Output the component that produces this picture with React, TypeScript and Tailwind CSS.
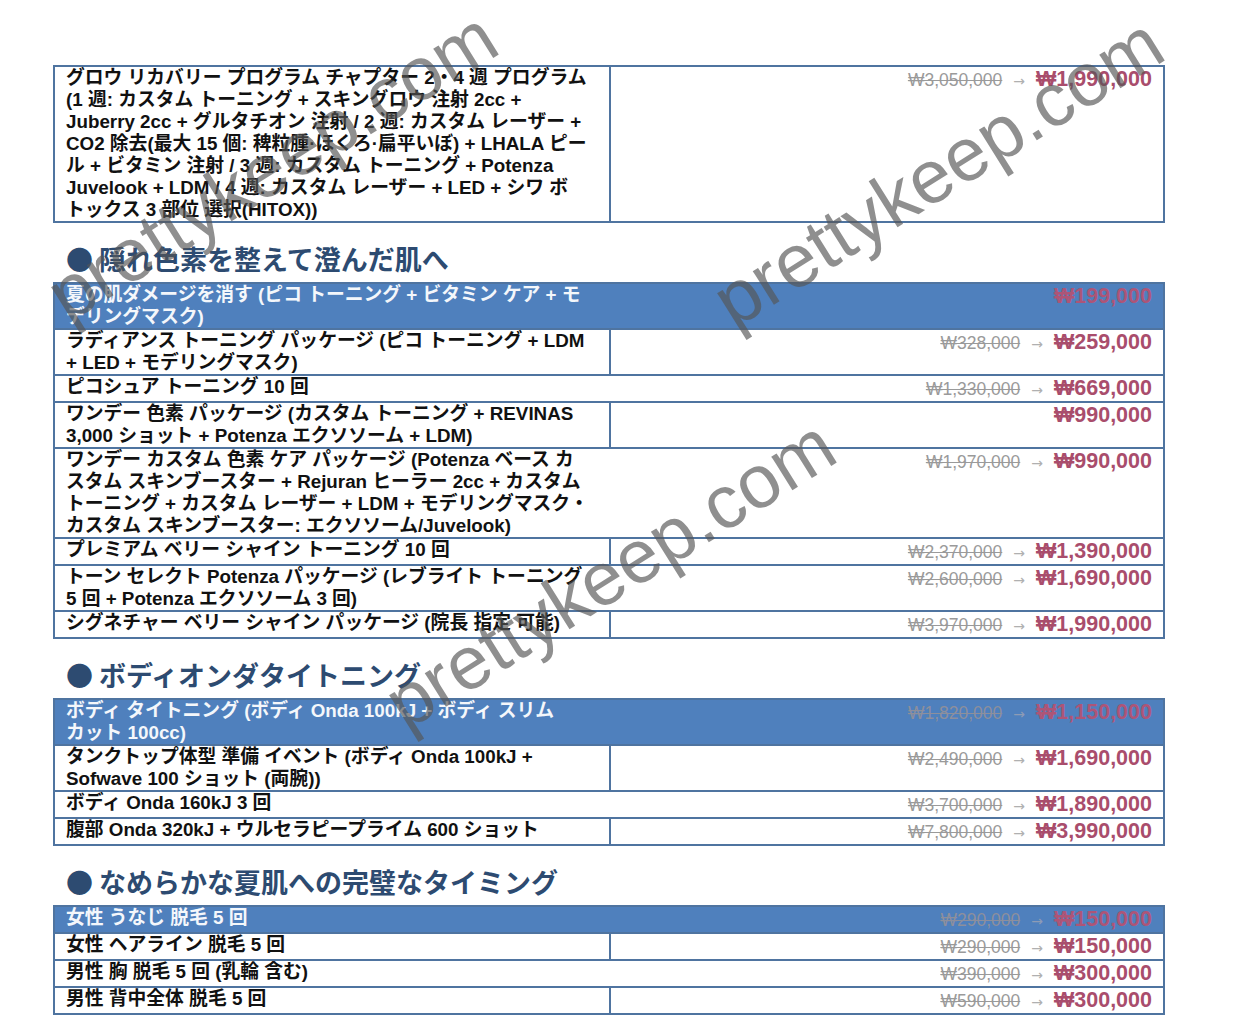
import React from "react";

type Row = {
  lines: string[];
  old?: string;
  price: string;
  divider?: boolean;
  header?: boolean;
};

type Section = { title?: string; rows: Row[] };

const sections: Section[] = [
  {
    rows: [
      {
        lines: [
          "グロウ リカバリー プログラム チャプター 2・4 週 プログラム",
          "(1 週: カスタム トーニング + スキングロウ 注射 2cc +",
          "Juberry 2cc + グルタチオン 注射 / 2 週: カスタム レーザー +",
          "CO2 除去(最大 15 個: 稗粒腫·ほくろ·扁平いぼ) + LHALA ピー",
          "ル + ビタミン 注射 / 3 週: カスタム トーニング + Potenza",
          "Juvelook + LDM / 4 週: カスタム レーザー + LED + シワ ボ",
          "トックス 3 部位 選択(HITOX))",
        ],
        old: "₩3,050,000",
        price: "₩1,990,000",
        divider: true,
      },
    ],
  },
  {
    title: "隠れ色素を整えて澄んだ肌へ",
    rows: [
      {
        header: true,
        lines: ["夏の肌ダメージを消す (ピコ トーニング + ビタミン ケア + モ", "デリングマスク)"],
        price: "₩199,000",
      },
      {
        lines: ["ラディアンス トーニング パッケージ (ピコ トーニング + LDM", "+ LED + モデリングマスク)"],
        old: "₩328,000",
        price: "₩259,000",
        divider: true,
      },
      { lines: ["ピコシュア トーニング 10 回"], old: "₩1,330,000", price: "₩669,000" },
      {
        lines: ["ワンデー 色素 パッケージ (カスタム トーニング + REVINAS", "3,000 ショット + Potenza エクソソーム + LDM)"],
        price: "₩990,000",
        divider: true,
      },
      {
        lines: [
          "ワンデー カスタム 色素 ケア パッケージ (Potenza ベース カ",
          "スタム スキンブースター + Rejuran ヒーラー 2cc + カスタム",
          "トーニング + カスタム レーザー + LDM + モデリングマスク・",
          "カスタム スキンブースター: エクソソーム/Juvelook)",
        ],
        old: "₩1,970,000",
        price: "₩990,000",
      },
      {
        lines: ["プレミアム ベリー シャイン トーニング 10 回"],
        old: "₩2,370,000",
        price: "₩1,390,000",
        divider: true,
      },
      {
        lines: ["トーン セレクト Potenza パッケージ (レブライト トーニング", "5 回 + Potenza エクソソーム 3 回)"],
        old: "₩2,600,000",
        price: "₩1,690,000",
      },
      {
        lines: ["シグネチャー ベリー シャイン パッケージ (院長 指定 可能)"],
        old: "₩3,970,000",
        price: "₩1,990,000",
        divider: true,
      },
    ],
  },
  {
    title: "ボディオンダタイトニング",
    rows: [
      {
        header: true,
        lines: ["ボディ タイトニング (ボディ Onda 100kJ + ボディ スリム", "カット 100cc)"],
        old: "₩1,820,000",
        price: "₩1,150,000",
      },
      {
        lines: ["タンクトップ体型 準備 イベント (ボディ Onda 100kJ +", "Sofwave 100 ショット (両腕))"],
        old: "₩2,490,000",
        price: "₩1,690,000",
        divider: true,
      },
      { lines: ["ボディ Onda 160kJ 3 回"], old: "₩3,700,000", price: "₩1,890,000" },
      {
        lines: ["腹部 Onda 320kJ + ウルセラピープライム 600 ショット"],
        old: "₩7,800,000",
        price: "₩3,990,000",
        divider: true,
      },
    ],
  },
  {
    title: "なめらかな夏肌への完璧なタイミング",
    rows: [
      { header: true, lines: ["女性 うなじ 脱毛 5 回"], old: "₩290,000", price: "₩150,000" },
      { lines: ["女性 ヘアライン 脱毛 5 回"], old: "₩290,000", price: "₩150,000", divider: true },
      { lines: ["男性 胸 脱毛 5 回 (乳輪 含む)"], old: "₩390,000", price: "₩300,000" },
      { lines: ["男性 背中全体 脱毛 5 回"], old: "₩590,000", price: "₩300,000", divider: true },
    ],
  },
];

function TableRow({ row, last }: { row: Row; last: boolean }) {
  return (
    <div
      className={`flex ${row.header ? "bg-[#4f80bd] text-[#f4f7fb]" : "bg-white text-[#111111]"} ${
        last ? "" : "border-b-2 border-[#4f74a0]"
      }`}
    >
      <div className="w-[554px] shrink-0 pl-[11px] pr-2 text-[18.8px] leading-[22px] font-bold">
        {row.lines.map((l, i) => (
          <div key={i} className="whitespace-nowrap">
            {l}
          </div>
        ))}
      </div>
      <div
        className={`flex-1 flex justify-end items-start pr-[11px] border-l-2 ${
          row.divider ? "border-[#4f74a0]" : "border-transparent"
        }`}
      >
        <div className="flex items-baseline leading-[25px] h-[25px]">
          {row.old && (
            <>
              <span
                className={`text-[17.5px] line-through ${row.header ? "text-[#8d8f9c]" : "text-[#9a9a9a]"}`}
              >
                {row.old}
              </span>
              <span
                className={`text-[14px] mx-[11px] font-['DejaVu_Sans',sans-serif] ${
                  row.header ? "text-[#8d9bb5]" : "text-[#b0b0b0]"
                }`}
              >
                →
              </span>
            </>
          )}
          <span className={`text-[21.5px] font-bold ${row.header ? "text-[#ad5577]" : "text-[#a94d6c]"}`}>
            {row.price}
          </span>
        </div>
      </div>
    </div>
  );
}

function Watermark({ x, y }: { x: number; y: number }) {
  return (
    <div
      className="absolute pointer-events-none whitespace-nowrap text-[75px] leading-none text-[rgba(85,85,85,0.66)] font-['Liberation_Sans',sans-serif]"
      style={{ left: x, top: y, transform: "translate(-50%, -50%) rotate(-32deg)" }}
    >
      prettykeep.com
    </div>
  );
}

export default function App() {
  return (
    <div className="relative w-full h-[1035px] overflow-hidden bg-white font-['Liberation_Sans','Noto_Sans_CJK_JP',sans-serif]">
      <div className="pt-[65px] pl-[53px] flex flex-col w-[1165px]">
        {sections.map((s, si) => (
          <div key={si} className="flex flex-col">
            {s.title && (
              <div className="mt-[19px] mb-[6px] h-[34px] flex items-center pl-[13px] text-[27px] leading-[34px] font-bold text-[#2d4b71] font-['Noto_Sans_CJK_JP',sans-serif]">
                <span className="mr-[6px]">●</span>
                <span>{s.title}</span>
              </div>
            )}
            <div className="border-2 border-[#4f74a0] w-[1112px]">
              {s.rows.map((r, ri) => (
                <TableRow key={ri} row={r} last={ri === s.rows.length - 1} />
              ))}
            </div>
          </div>
        ))}
      </div>
      <Watermark x={272} y={166} />
      <Watermark x={938} y={172} />
      <Watermark x={610} y={574} />
    </div>
  );
}
